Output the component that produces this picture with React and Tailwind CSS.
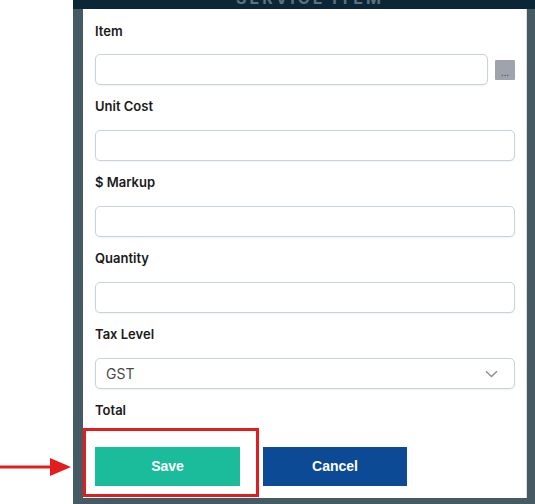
const fields = [
  { label: 'Unit Cost' },
  { label: '$ Markup' },
  { label: 'Quantity' },
];

const Label = ({ children }) => (
  <div className="h-5 flex items-center text-[13px] font-semibold text-[#1a1a1a]">{children}</div>
);

const inputCls =
  'h-[31px] rounded-[5px] border border-[#c6d3dc] bg-white shadow-[0_1px_2px_rgba(0,0,0,0.06)]';

export default function App() {
  return (
    <div
      className="w-[535px] h-[504px] flex bg-white overflow-hidden"
      style={{ fontFamily: 'Inter, "Open Sans", sans-serif' }}
    >
      {/* annotation arrow column */}
      <div className="relative w-[73px] shrink-0">
        <svg className="absolute left-0 top-[456px]" width="72" height="22" viewBox="0 0 72 22">
          <rect x="0" y="9.5" width="54" height="3" fill="#e21d1d" />
          <polygon points="50,2 71,11 50,20" fill="#e21d1d" />
        </svg>
      </div>

      {/* modal */}
      <div className="flex-1 flex flex-col bg-[#465a64]">
        <div className="h-[9px] bg-[#0b2737] overflow-hidden flex justify-center">
          <span className="mt-[-14px] pl-[12px] text-[16px] font-bold tracking-[3px] text-[#5f717c] whitespace-nowrap">
            SERVICE ITEM
          </span>
        </div>
        <div className="flex-1 flex pl-[10px] pr-[8px] pb-[6px]">
          <div className="relative flex-1 bg-white border-r border-[#d9dde0] pl-[12px] pr-[11px] pt-[13px]">
            <Label>Item</Label>
            <div className="mt-[12px] flex items-center gap-[7px]">
              <div className={`${inputCls} flex-1`} />
              <div className="w-[20px] h-[20px] bg-[#9ea3ad] rounded-[1px] flex items-end justify-center pb-[3px]">
                <span className="text-[8px] leading-none text-[#3f4650] font-bold">...</span>
              </div>
            </div>

            {fields.map((f) => (
              <div key={f.label} className="mt-[12px]">
                <Label>{f.label}</Label>
                <div className={`${inputCls} mt-[13px]`} />
              </div>
            ))}

            <div className="mt-[12px]">
              <Label>Tax Level</Label>
              <div className={`${inputCls} mt-[13px] flex items-center justify-between pl-[10px] pr-[16px]`}>
                <span className="text-[14px] text-[#4a4a4a]">GST</span>
                <svg width="13" height="8" viewBox="0 0 13 8" fill="none">
                  <path d="M1 1.2l5.5 5.3L12 1.2" stroke="#8a9096" strokeWidth="1.4" />
                </svg>
              </div>
            </div>

            <div className="mt-[12px]">
              <Label>Total</Label>
            </div>

            <div
              className="mt-[26px] flex gap-[23px] text-[14px] font-bold text-white"
              style={{ fontFamily: '"Liberation Sans", Arial, sans-serif' }}
            >
              <button className="w-[145px] h-[39px] bg-[#1bbc9b]">Save</button>
              <button className="w-[144px] h-[39px] bg-[#0c4a96]">Cancel</button>
            </div>

            {/* highlight box */}
            <div className="absolute left-0 top-[419px] w-[176px] h-[69px] border-[3px] border-[#e21d1d]" />
          </div>
        </div>
      </div>
    </div>
  );
}
